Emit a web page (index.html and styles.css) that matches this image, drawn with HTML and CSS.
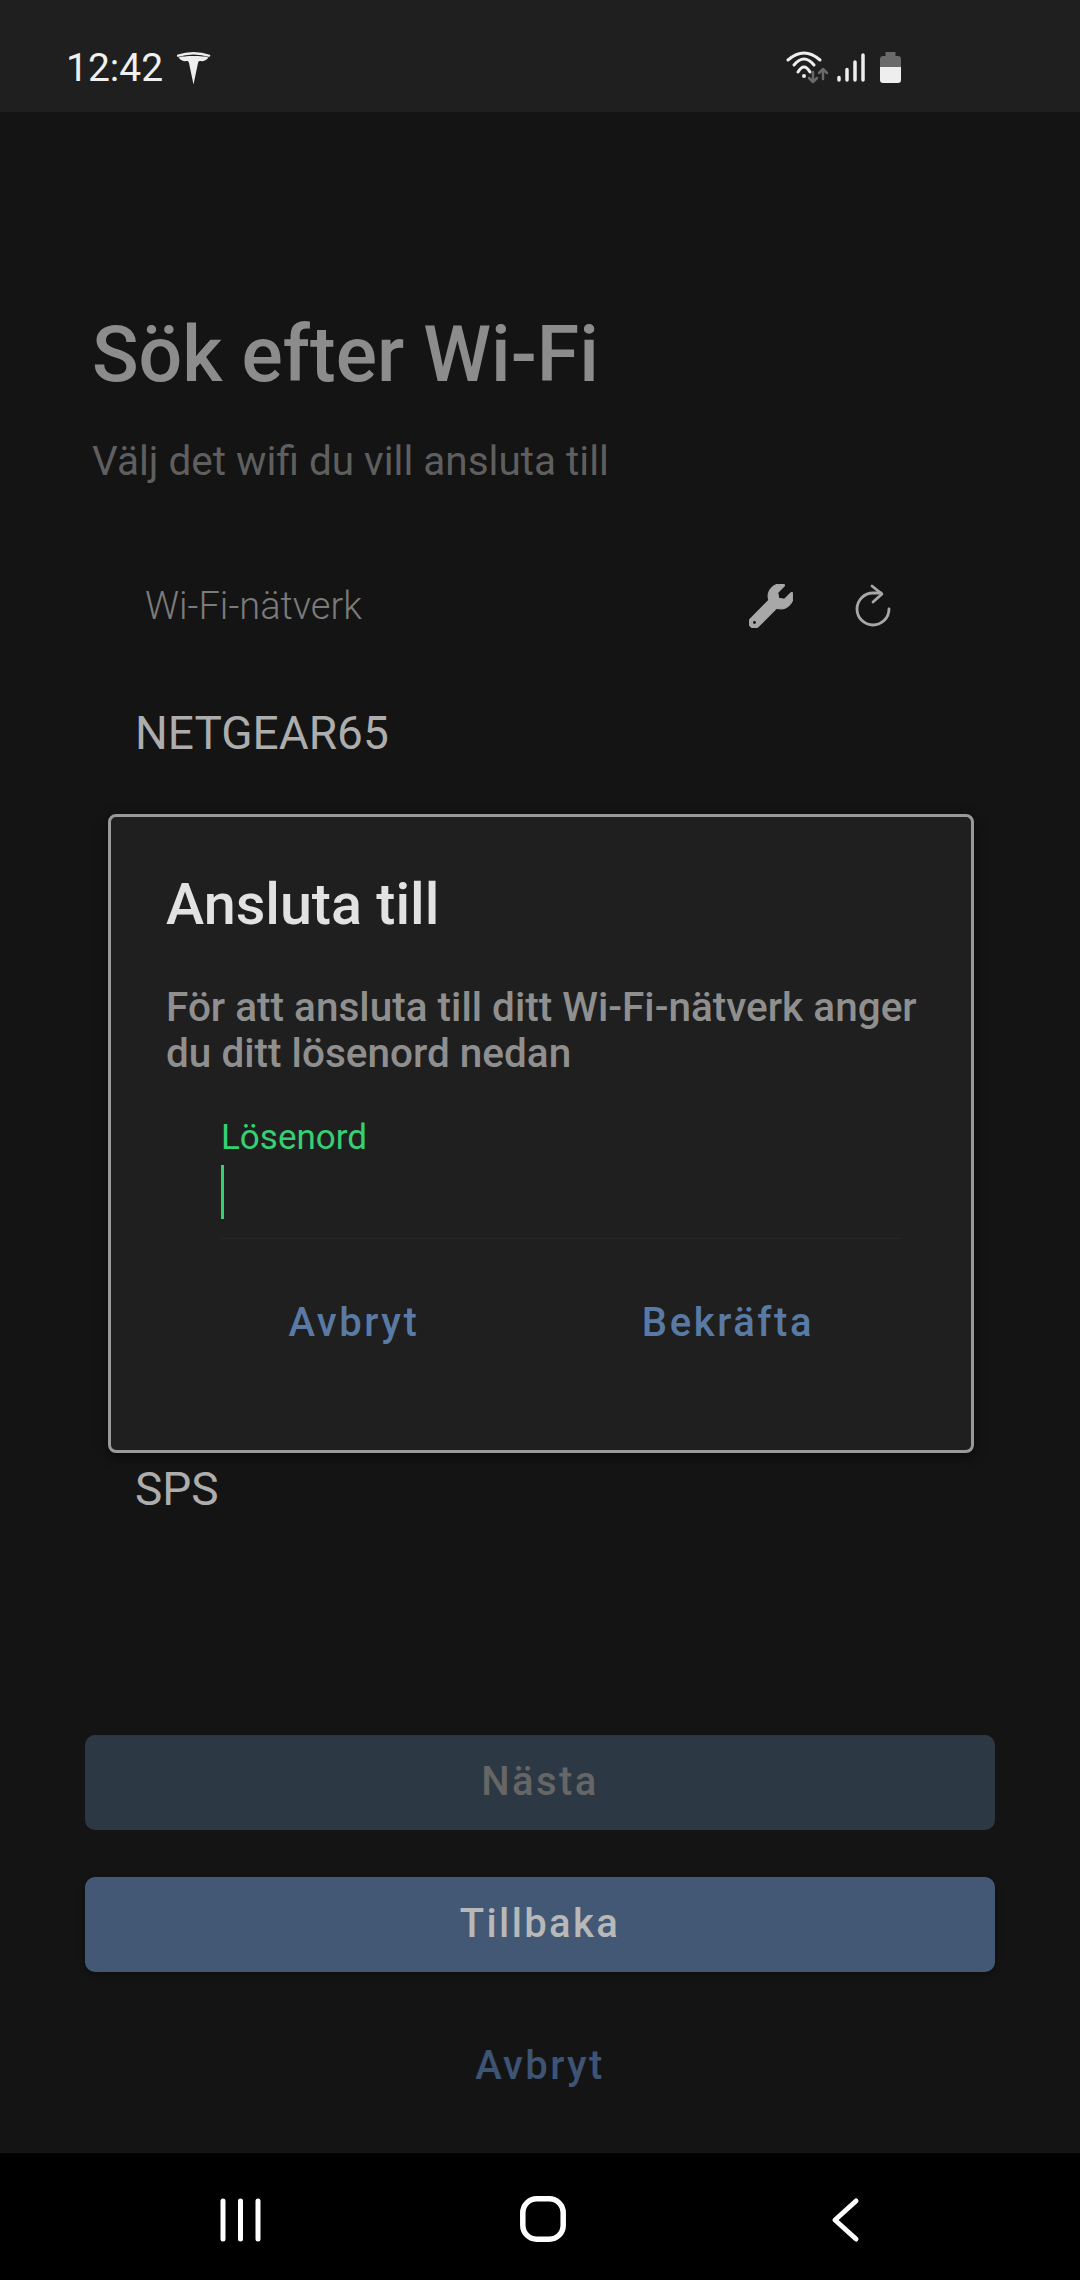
FILE: index.html
```html
<!DOCTYPE html>
<html lang="sv">

<head>
    <meta charset="UTF-8">
    <meta name="viewport" content="width=device-width, initial-scale=1.0">
    <title>Sök efter Wi-Fi</title>
    <link rel="stylesheet" href="styles.css">
</head>

<body>
    <div class="screen">
        <header class="statusBar">
            <span class="clock">12:42</span>
            <svg class="teslaIcon" viewBox="0 0 34 36" width="34" height="36">
                <path fill="#eee" d="M-0.500 5Q16.500 -1 33.500 5L32.500 7Q16.500 2 0.500 7Z" />
                <path fill="#eee" d="M1.500 7.500C6 5.500 27 5.500 31.500 7.500C29 11 26 11.500 23 11Q21.500 10.500 21 13L16.500 34.500L12 13Q11.500 10.500 10 11C7 11.500 4 11 1.500 7.500Z" />
            </svg>
            <div class="statusIcons">
                <svg viewBox="0 0 46 36" width="46" height="36" fill="none" stroke-linecap="round" stroke-linejoin="round">
                    <g stroke="#eee" stroke-width="3">
                        <path d="M2 10Q18 -4 34 10" />
                        <path d="M8 15Q18 3 28 15" />
                        <path d="M12 22Q18 12 24 22" />
                    </g>
                    <circle cx="18" cy="26" r="2" fill="#eee" />
                    <g stroke="#6a6a6a" stroke-width="2.500">
                        <path d="M27 22V32M23 28L27 32L31 28" />
                        <path d="M37 29V19M33 23L37 19L41 23" />
                    </g>
                </svg>
                <svg viewBox="0 0 40 36" width="40" height="36" stroke="#eee" stroke-width="3.500" stroke-linecap="round">
                    <path d="M3 30V27.500M11 30V19.500M19 30V12M27 30V5" />
                </svg>
                <svg viewBox="0 0 21 36" width="21" height="36">
                    <path fill="#6a6a6a" d="M5.500 2H15.500V6H18Q21 6 21 9V17H0V9Q0 6 3 6H5.500Z" />
                    <path fill="#eee" d="M0 17H21V30Q21 33 18 33H3Q0 33 0 30Z" />
                </svg>
            </div>
        </header>

        <main class="content">
            <h1 class="pageTitle">Sök efter Wi-Fi</h1>
            <p class="pageHint">Välj det wifi du vill ansluta till</p>

            <div class="networkHeader">
                <span class="networkLabel">Wi-Fi-nätverk</span>
                <svg class="wrenchIcon" viewBox="0 0 512 512" width="44" height="44">
                    <path fill="#a8a8a8" stroke="#a8a8a8" stroke-width="14" fill-rule="evenodd" d="M507.730 109.100c-2.240-9.030-13.540-12.090-20.120-5.510l-74.360 74.360-67.880-11.310-11.310-67.880 74.360-74.360c6.620-6.620 3.430-17.900-5.660-20.160-47.380-11.740-99.550.91-136.580 37.930-39.640 39.640-50.550 97.100-34.050 147.200L18.740 402.760c-24.990 24.990-24.990 65.510 0 90.500 24.990 24.990 65.510 24.990 90.500 0l213.210-213.210c50.120 16.710 107.470 5.680 147.370-34.220 37.070-37.070 49.700-89.320 37.910-136.730zM64 472c-13.250 0-24-10.750-24-24 0-13.260 10.750-24 24-24s24 10.740 24 24c0 13.250-10.750 24-24 24z" />
                </svg>
                <svg class="refreshIcon" viewBox="0 0 38 44" width="38" height="44" fill="none" stroke="#a8a8a8" stroke-width="2.800" stroke-linecap="round" stroke-linejoin="round">
                    <path d="M35 25A16 16 0 1 1 19 9H27" />
                    <path d="M18 2L28 10L19 18" />
                </svg>
            </div>

            <ul class="networkList">
                <li>NETGEAR65</li>
                <li class="lastNetwork">SPS</li>
            </ul>

            <button class="wideButton nextButton">Nästa</button>
            <button class="wideButton backButton">Tillbaka</button>
            <button class="cancelButton">Avbryt</button>
        </main>

        <nav class="navBar">
            <div class="navSlot">
                <svg viewBox="0 0 48 50" width="48" height="50" stroke="#fff" stroke-width="5" stroke-linecap="round">
                    <path d="M6 6V44M23.500 6V44M41 6V44" />
                </svg>
            </div>
            <div class="navSlot">
                <svg viewBox="0 0 50 50" width="50" height="50" fill="none" stroke="#fff" stroke-width="5.500">
                    <rect x="4.800" y="3.800" width="40.400" height="40.400" rx="14" />
                </svg>
            </div>
            <div class="navSlot">
                <svg viewBox="0 0 30 50" width="30" height="50" fill="none" stroke="#fff" stroke-width="5" stroke-linecap="round" stroke-linejoin="round">
                    <path d="M26 6L5 25L26 44" />
                </svg>
            </div>
        </nav>

        <div class="dialog">
            <h2 class="dialogTitle">Ansluta till</h2>
            <p class="dialogText">För att ansluta till ditt Wi-Fi-nätverk anger du ditt lösenord nedan</p>
            <label class="fieldLabel" for="password">Lösenord</label>
            <div class="passwordField" id="password"><span class="caret"></span></div>
            <div class="dialogActions">
                <button class="dialogButton">Avbryt</button>
                <button class="dialogButton">Bekräfta</button>
            </div>
        </div>
    </div>
</body>

</html>
```

FILE: styles.css
```css
* {
    box-sizing: border-box;
}

body {
    margin: 0;
    background-color: #141414;
    font-family: Roboto, "Liberation Sans", sans-serif;
}

button {
    border: none;
    background: none;
    padding: 0;
    font-family: inherit;
}

.screen {
    position: relative;
    display: flex;
    flex-direction: column;
    width: 1080px;
    height: 2280px;
    overflow: hidden;
}

/* status bar */
.statusBar {
    display: flex;
    align-items: flex-start;
    height: 112px;
    padding: 50px 179px 0 66px;
    background-color: #1f1f1f;
}

.clock {
    font-size: 39px;
    line-height: 36px;
    color: #f0f0f0;
}

.teslaIcon {
    margin-left: 14px;
}

.statusIcons {
    display: flex;
    gap: 4px;
    margin-left: auto;
}

/* page content */
.content {
    display: flex;
    flex-direction: column;
    flex: 1;
    padding: 0 85px;
}

.pageTitle {
    margin: 201px 0 0 7px;
    font-size: 77px;
    line-height: 84px;
    font-weight: 500;
    color: #8c8c8c;
}

.pageHint {
    margin: 40px 0 0 7px;
    font-size: 40.500px;
    line-height: 48px;
    color: #5f5f5f;
}

.networkHeader {
    display: flex;
    align-items: center;
    height: 60px;
    margin: 91px 0 0 60px;
}

.networkLabel {
    font-size: 38px;
    font-weight: 300;
    color: #7b7b7b;
}

.wrenchIcon {
    margin-left: auto;
}

.refreshIcon {
    margin: 0 103px 0 61px;
}

.networkList {
    margin: 67px 0 0 50px;
    padding: 0;
    list-style: none;
    font-size: 46px;
    line-height: 60px;
    color: #adadad;
}

.lastNetwork {
    margin-top: 696px;
}

.wideButton {
    height: 95px;
    padding-bottom: 3px;
    border-radius: 10px;
    font-size: 40px;
    font-weight: 500;
    letter-spacing: 2.400px;
}

.nextButton {
    margin-top: 216px;
    background-color: #2c3945;
    color: #666;
}

.backButton {
    margin-top: 47px;
    background-color: #435875;
    color: #b8b8b8;
    box-shadow: 0 3px 6px rgba(0, 0, 0, 0.3);
}

.cancelButton {
    margin-top: 68px;
    height: 50px;
    font-size: 40px;
    font-weight: 500;
    letter-spacing: 2.400px;
    color: #3d5475;
}

/* bottom navigation */
.navBar {
    display: flex;
    height: 127px;
    padding: 42px 0 0 90px;
    background-color: #000;
}

.navSlot {
    display: flex;
    justify-content: center;
    flex: 0 0 302px;
}

/* password dialog */
.dialog {
    position: absolute;
    left: 108px;
    top: 814px;
    width: 866px;
    height: 639px;
    padding: 58px 0 0 55px;
    background-color: #1f1f1f;
    border: 3px solid #999;
    border-radius: 8px;
    box-shadow: 0 4px 12px rgba(0, 0, 0, 0.5);
}

.dialogTitle {
    margin: 0;
    font-size: 57.500px;
    line-height: 60px;
    font-weight: 500;
    color: #e2e2e2;
}

.dialogText {
    margin: 49px 40px 0 0;
    font-size: 40.500px;
    line-height: 46px;
    font-weight: 500;
    color: #8f8f8f;
}

.fieldLabel {
    display: block;
    margin: 42px 0 0 55px;
    font-size: 35px;
    line-height: 40px;
    color: #37cf72;
}

.passwordField {
    width: 680px;
    height: 81px;
    margin-left: 55px;
    padding-top: 7px;
    border-bottom: 1px solid #262626;
}

.caret {
    display: block;
    width: 3px;
    height: 54px;
    background-color: #37cf72;
}

.dialogActions {
    display: flex;
    justify-content: center;
    margin: 58px 0 0 -55px;
}

.dialogButton {
    flex: 0 0 374px;
    height: 50px;
    font-size: 40px;
    font-weight: 500;
    letter-spacing: 2.600px;
    color: #597aa4;
}
```
